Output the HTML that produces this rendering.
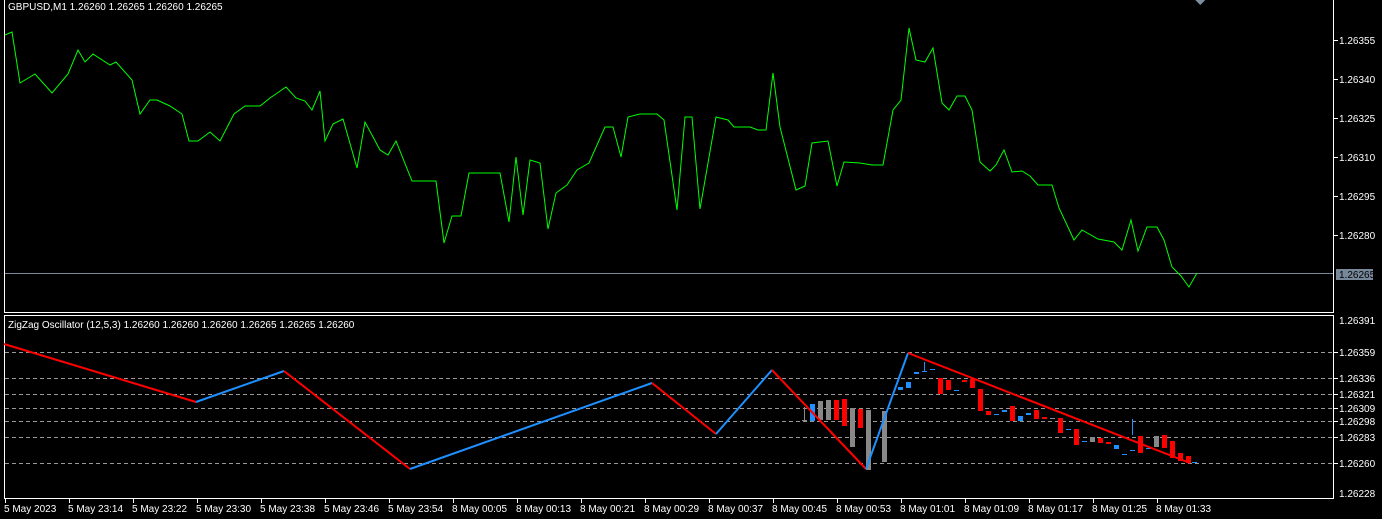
<!DOCTYPE html>
<html><head><meta charset="utf-8"><style>
html,body{margin:0;padding:0;background:#000;width:1382px;height:519px;overflow:hidden}
svg{display:block}
text{font-family:"Liberation Sans",sans-serif;font-size:10px;fill:#fff}
</style></head><body>
<svg width="1382" height="519" viewBox="0 0 1382 519" xmlns="http://www.w3.org/2000/svg" shape-rendering="crispEdges">
<rect width="1382" height="519" fill="#000"/>
<!-- frames -->
<line x1="4.5" y1="0" x2="4.5" y2="313" stroke="#fff"/>
<line x1="4" y1="312.5" x2="1334" y2="312.5" stroke="#fff"/>
<line x1="1333.5" y1="0" x2="1333.5" y2="313" stroke="#fff"/>
<line x1="4.5" y1="315" x2="4.5" y2="499" stroke="#fff"/>
<line x1="4" y1="315.5" x2="1334" y2="315.5" stroke="#fff"/>
<line x1="1333.5" y1="315" x2="1333.5" y2="499" stroke="#fff"/>
<line x1="4" y1="498.5" x2="1334" y2="498.5" stroke="#fff"/>
<polygon points="1195,0 1205,0 1200,5" fill="#7a8ea0"/>
<text x="8" y="10">GBPUSD,M1  1.26260 1.26265 1.26260 1.26265</text>
<text x="8" y="328">ZigZag Oscillator (12,5,3) 1.26260 1.26260 1.26260 1.26265 1.26265 1.26260</text>
<!-- upper axis -->
<g stroke="#fff">
<line x1="1334" y1="40.5" x2="1338" y2="40.5"/><line x1="1334" y1="79.5" x2="1338" y2="79.5"/><line x1="1334" y1="118.5" x2="1338" y2="118.5"/><line x1="1334" y1="157.5" x2="1338" y2="157.5"/><line x1="1334" y1="196.5" x2="1338" y2="196.5"/><line x1="1334" y1="235.5" x2="1338" y2="235.5"/>
</g>
<g>
<text x="1339" y="44">1.26355</text><text x="1339" y="83">1.26340</text><text x="1339" y="122">1.26325</text><text x="1339" y="161">1.26310</text><text x="1339" y="200">1.26295</text><text x="1339" y="239">1.26280</text>
</g>
<line x1="5" y1="273.5" x2="1333" y2="273.5" stroke="#77889a"/>
<rect x="1336" y="269" width="37" height="11" fill="#77889a"/>
<text x="1339" y="278" fill="#000" style="fill:#000">1.26265</text>
<!-- green line -->
<polyline fill="none" stroke="#00ff00" stroke-width="1" shape-rendering="auto" points="5,35 12,32 20,83 35,74 52,93 68,74 78,50 85,62 93,54 110,65 116,62 132,80 140,114 150,100 157,100 170,106 182,114 189,141 198,141 210,132 220,141 234,114 245,106 260,106 270,98 286,87 296,98 305,101 312,110 320,91 325,141 333,124 343,119 357,168 365,122 380,150 388,155 396,141 412,181 436,181 444,243 452,216 461,216 469,173 500,173 509,222 516,157 523,215 530,160 540,163 548,229 556,193 567,185 577,170 589,163 605,127 613,127 621,157 628,117 640,114 657,114 664,120 677,210 685,117 692,117 700,209 716,117 728,120 734,127 740,127 750,127 758,130 766,130 773,73 780,127 796,190 805,186 812,143 828,141 837,186 844,162 860,163 872,165 883,165 893,110 901,100 909,28 916,60 925,62 933,48 942,103 949,110 957,96 965,96 972,110 980,162 990,171 996,165 1004,150 1012,172 1022,171 1030,176 1038,185 1052,185 1059,208 1074,240 1082,230 1098,239 1114,242 1122,250 1131,220 1138,251 1147,227 1157,227 1164,240 1172,267 1181,276 1189,287 1197,273"/>
<!-- lower dashed grid -->
<g stroke="#999" stroke-dasharray="4,3">
<line x1="5" y1="352.5" x2="1333" y2="352.5"/><line x1="5" y1="378.5" x2="1333" y2="378.5"/><line x1="5" y1="394.5" x2="1333" y2="394.5"/><line x1="5" y1="408.5" x2="1333" y2="408.5"/><line x1="5" y1="421.5" x2="1333" y2="421.5"/><line x1="5" y1="437.5" x2="1333" y2="437.5"/><line x1="5" y1="463.5" x2="1333" y2="463.5"/>
</g>
<g stroke="#fff">
<line x1="1334" y1="352.5" x2="1338" y2="352.5"/><line x1="1334" y1="378.5" x2="1338" y2="378.5"/><line x1="1334" y1="394.5" x2="1338" y2="394.5"/><line x1="1334" y1="408.5" x2="1338" y2="408.5"/><line x1="1334" y1="421.5" x2="1338" y2="421.5"/><line x1="1334" y1="437.5" x2="1338" y2="437.5"/><line x1="1334" y1="463.5" x2="1338" y2="463.5"/>
</g>
<text x="1339" y="324">1.26391</text><text x="1339" y="356">1.26359</text><text x="1339" y="382">1.26336</text><text x="1339" y="398">1.26321</text><text x="1339" y="412">1.26309</text><text x="1339" y="425">1.26298</text><text x="1339" y="441">1.26283</text><text x="1339" y="467">1.26260</text><text x="1339" y="497">1.26228</text>
<!-- candles -->
<g shape-rendering="crispEdges">
<rect x="804" y="407" width="1" height="14" fill="#888"/><rect x="802" y="420" width="5" height="1" fill="#888"/>
<rect x="810" y="404" width="5" height="17" fill="#1e90ff"/>
<rect x="818" y="401" width="5" height="19" fill="#888"/>
<rect x="826" y="400" width="5" height="20" fill="#888"/>
<rect x="834" y="400" width="5" height="20" fill="#f00"/>
<rect x="842" y="399" width="5" height="27" fill="#f00"/>
<rect x="850" y="408" width="5" height="39" fill="#888"/>
<rect x="858" y="409" width="5" height="19" fill="#f00"/>
<rect x="866" y="410" width="5" height="60" fill="#888"/>
<rect x="882" y="411" width="5" height="51" fill="#888"/>
<rect x="898" y="387" width="5" height="3" fill="#1e90ff"/>
<rect x="906" y="382" width="5" height="6" fill="#1e90ff"/>
<rect x="914" y="372" width="5" height="2" fill="#1e90ff"/>
<rect x="922" y="371" width="5" height="1" fill="#1e90ff"/><rect x="924" y="362" width="1" height="9" fill="#1e90ff"/>
<rect x="930" y="369" width="5" height="1" fill="#1e90ff"/>
<rect x="938" y="378" width="5" height="16" fill="#f00"/>
<rect x="946" y="380" width="5" height="10" fill="#f00"/>
<rect x="954" y="390" width="5" height="1" fill="#1e90ff"/>
<rect x="962" y="380" width="5" height="2" fill="#f00"/>
<rect x="970" y="379" width="5" height="9" fill="#f00"/>
<rect x="978" y="389" width="5" height="22" fill="#f00"/>
<rect x="986" y="411" width="5" height="4" fill="#f00"/>
<rect x="994" y="414" width="5" height="1" fill="#1e90ff"/>
<rect x="1002" y="410" width="5" height="2" fill="#1e90ff"/>
<rect x="1010" y="406" width="5" height="15" fill="#f00"/>
<rect x="1018" y="416" width="5" height="5" fill="#1e90ff"/>
<rect x="1026" y="413" width="5" height="2" fill="#1e90ff"/>
<rect x="1034" y="410" width="5" height="9" fill="#f00"/>
<rect x="1042" y="417" width="5" height="2" fill="#f00"/>
<rect x="1050" y="418" width="5" height="1" fill="#888"/>
<rect x="1058" y="418" width="5" height="15" fill="#f00"/>
<rect x="1066" y="429" width="5" height="1" fill="#1e90ff"/>
<rect x="1074" y="429" width="5" height="16" fill="#f00"/>
<rect x="1082" y="441" width="5" height="1" fill="#1e90ff"/>
<rect x="1090" y="437" width="5" height="5" fill="#888"/>
<rect x="1098" y="438" width="5" height="5" fill="#f00"/>
<rect x="1106" y="442" width="5" height="2" fill="#f00"/>
<rect x="1114" y="445" width="5" height="4" fill="#1e90ff"/>
<rect x="1122" y="454" width="5" height="1" fill="#1e90ff"/>
<rect x="1130" y="450" width="5" height="1" fill="#1e90ff"/><rect x="1132" y="419" width="1" height="16" fill="#1e90ff"/>
<rect x="1138" y="436" width="5" height="17" fill="#f00"/>
<rect x="1146" y="448" width="5" height="1" fill="#1e90ff"/>
<rect x="1154" y="436" width="5" height="11" fill="#888"/>
<rect x="1162" y="435" width="5" height="13" fill="#f00"/>
<rect x="1170" y="441" width="5" height="17" fill="#f00"/>
<rect x="1178" y="453" width="5" height="8" fill="#f00"/>
<rect x="1186" y="456" width="5" height="7" fill="#f00"/>
<rect x="1192" y="462" width="5" height="1" fill="#1e90ff"/>
</g>
<!-- zigzag -->
<g fill="none" stroke-width="2" shape-rendering="auto">
<polyline stroke="#f00" points="4,344 196,402"/>
<polyline stroke="#1e90ff" points="196,402 284,371"/>
<polyline stroke="#f00" points="284,371 410,469"/>
<polyline stroke="#1e90ff" points="410,469 652,383"/>
<polyline stroke="#f00" points="652,383 716,434"/>
<polyline stroke="#1e90ff" points="716,434 772,370"/>
<polyline stroke="#f00" points="772,370 866,469"/>
<polyline stroke="#1e90ff" points="866,469 908,353"/>
<polyline stroke="#f00" points="908,353 1190,463"/>
</g>
<!-- time axis -->
<g stroke="#fff">
<line x1="5.5" y1="499" x2="5.5" y2="503"/><line x1="69.5" y1="499" x2="69.5" y2="503"/><line x1="133.5" y1="499" x2="133.5" y2="503"/><line x1="197.5" y1="499" x2="197.5" y2="503"/><line x1="261.5" y1="499" x2="261.5" y2="503"/><line x1="325.5" y1="499" x2="325.5" y2="503"/><line x1="389.5" y1="499" x2="389.5" y2="503"/><line x1="453.5" y1="499" x2="453.5" y2="503"/><line x1="517.5" y1="499" x2="517.5" y2="503"/><line x1="581.5" y1="499" x2="581.5" y2="503"/><line x1="645.5" y1="499" x2="645.5" y2="503"/><line x1="709.5" y1="499" x2="709.5" y2="503"/><line x1="773.5" y1="499" x2="773.5" y2="503"/><line x1="837.5" y1="499" x2="837.5" y2="503"/><line x1="901.5" y1="499" x2="901.5" y2="503"/><line x1="965.5" y1="499" x2="965.5" y2="503"/><line x1="1029.5" y1="499" x2="1029.5" y2="503"/><line x1="1093.5" y1="499" x2="1093.5" y2="503"/><line x1="1157.5" y1="499" x2="1157.5" y2="503"/>
</g>
<g>
<text x="4" y="512">5 May 2023</text><text x="68" y="512">5 May 23:14</text><text x="132" y="512">5 May 23:22</text><text x="196" y="512">5 May 23:30</text><text x="260" y="512">5 May 23:38</text><text x="324" y="512">5 May 23:46</text><text x="388" y="512">5 May 23:54</text><text x="452" y="512">8 May 00:05</text><text x="516" y="512">8 May 00:13</text><text x="580" y="512">8 May 00:21</text><text x="644" y="512">8 May 00:29</text><text x="708" y="512">8 May 00:37</text><text x="772" y="512">8 May 00:45</text><text x="836" y="512">8 May 00:53</text><text x="900" y="512">8 May 01:01</text><text x="964" y="512">8 May 01:09</text><text x="1028" y="512">8 May 01:17</text><text x="1092" y="512">8 May 01:25</text><text x="1156" y="512">8 May 01:33</text>
</g>
</svg>
</body></html>
